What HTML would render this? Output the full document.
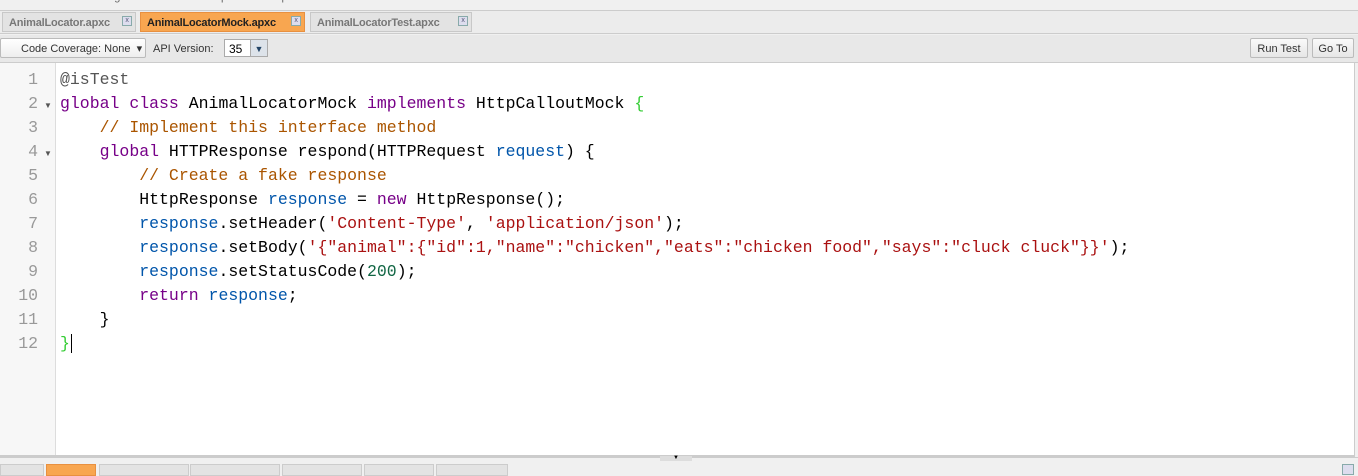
<!DOCTYPE html>
<html><head><style>
body{margin:0;width:1358px;height:470px;overflow:hidden;background:#f0f0f0;font-family:"Liberation Sans",sans-serif;position:relative}
.menu{position:absolute;top:0;left:0;width:1358px;height:10px;background:#f0f0f0;border-bottom:1px solid #ccc;overflow:hidden}
.menu span{position:absolute;top:-9px;font-size:11px;color:#666}
.tabs{position:absolute;top:11px;left:0;width:1358px;height:22px;background:#ececec;border-bottom:1px solid #ccc}
.tab{position:absolute;top:1px;height:20px;background:#e3e3e3;border:1px solid #c8c8c8;font-size:11px;font-weight:bold;color:#777;line-height:20px;padding-left:6px;box-sizing:border-box;letter-spacing:-0.2px}
.tab.a{background:#f8a650;color:#222;border-color:#e89040}
.x{position:absolute;top:3px;right:3px;width:8px;height:8px;border:1px solid #8aa;background:#dde;font-size:7px;line-height:7px;text-align:center;color:#557;font-weight:normal}
.tb{position:absolute;top:35px;left:0;width:1358px;height:27px;background:#e8e8e8;border-bottom:1px solid #ccc}
.btn{position:absolute;top:3px;height:20px;border:1px solid #bbb;border-radius:2px;background:linear-gradient(#fafafa,#e6e6e6);font-size:11px;color:#333;line-height:20px;box-sizing:border-box;text-align:center}
.ed{position:absolute;top:63px;left:0;width:1354px;height:392px;background:#fff;border-right:1px solid #ccc;border-bottom:2px solid #ccc}
.gut{position:absolute;top:0;left:0;width:55px;height:392px;background:#f7f7f7;border-right:1px solid #ddd}
.ln{position:absolute;left:0;width:38px;text-align:right;font:16.5px "Liberation Mono",monospace;color:#999;line-height:24px}
.fold{position:absolute;left:44px;font-size:8px;color:#555}
pre{position:absolute;left:60px;top:5px;margin:0;font:16.5px "Liberation Mono",monospace;line-height:24px;color:#000}
.k{color:#708}.v{color:#05a}.c{color:#a50}.s{color:#a11}.n{color:#164}.b{color:#3c3}
.bot{position:absolute;top:457px;left:0;width:1358px;height:13px;background:#f0f0f0;border-top:1px solid #ccc}
.bt{position:absolute;top:6px;height:10px;background:#e3e3e3;border:1px solid #ccc}
</style></head><body>
<div class="menu"><span style="left:4px">File</span><span style="left:46px">Edit</span><span style="left:88px">Debug</span><span style="left:145px">Test</span><span style="left:190px">Workspace</span><span style="left:265px">Help</span></div>
<div class="tabs">
<div class="tab" style="left:2px;width:134px">AnimalLocator.apxc<div class="x">x</div></div>
<div class="tab a" style="left:140px;width:165px">AnimalLocatorMock.apxc<div class="x">x</div></div>
<div class="tab" style="left:310px;width:162px">AnimalLocatorTest.apxc<div class="x">x</div></div>
</div>
<div class="tb">
<div class="btn" style="left:0;width:146px;text-align:left;padding-left:20px;background:linear-gradient(#fff,#eee)">Code Coverage: None &nbsp;▾</div>
<span style="position:absolute;left:153px;top:8px;font-size:11px;color:#333">API Version:</span>
<div style="position:absolute;left:224px;top:4px;width:44px;height:18px;border:1px solid #aaa;background:#fff;font-size:12px;line-height:18px;padding-left:4px;box-sizing:border-box">35<div style="position:absolute;right:0;top:0;width:16px;height:16px;background:#dde3ea;border-left:1px solid #aaa;font-size:9px;text-align:center;color:#246">▼</div></div>
<div class="btn" style="left:1250px;width:58px">Run Test</div>
<div class="btn" style="left:1312px;width:42px">Go To</div>
</div>
<div class="ed">
<div class="gut">
<div class="ln" style="top:5px">1<br>2<br>3<br>4<br>5<br>6<br>7<br>8<br>9<br>10<br>11<br>12</div>
<div class="fold" style="top:38px">▼</div><div class="fold" style="top:86px">▼</div>
</div>
<pre><span class="c" style="color:#555">@isTest</span>
<span class="k">global</span> <span class="k">class</span> AnimalLocatorMock <span class="k">implements</span> HttpCalloutMock <span class="b">{</span>
    <span class="c">// Implement this interface method</span>
    <span class="k">global</span> HTTPResponse respond(HTTPRequest <span class="v">request</span>) {
        <span class="c">// Create a fake response</span>
        HttpResponse <span class="v">response</span> = <span class="k">new</span> HttpResponse();
        <span class="v">response</span>.setHeader(<span class="s">'Content-Type'</span>, <span class="s">'application/json'</span>);
        <span class="v">response</span>.setBody(<span class="s">'{"animal":{"id":1,"name":"chicken","eats":"chicken food","says":"cluck cluck"}}'</span>);
        <span class="v">response</span>.setStatusCode(<span class="n">200</span>);
        <span class="k">return</span> <span class="v">response</span>;
    }
<span class="b">}</span><span style="border-left:1px solid #000;margin-left:1px"></span></pre>
</div>
<div class="bot">
<div style="position:absolute;left:660px;top:-2px;width:32px;height:5px;background:#ddd;font-size:6px;text-align:center;line-height:5px">▼</div>
<div class="bt" style="left:0;width:42px"></div><div class="bt" style="left:46px;width:48px;background:#f8a650;border-color:#e89040"></div>
<div class="bt" style="left:99px;width:88px"></div><div class="bt" style="left:190px;width:88px"></div><div class="bt" style="left:282px;width:78px"></div><div class="bt" style="left:364px;width:68px"></div><div class="bt" style="left:436px;width:70px"></div>
<div style="position:absolute;right:4px;top:6px;width:10px;height:9px;border:1px solid #8aa;background:#dde"></div>
</div>
</body></html>
